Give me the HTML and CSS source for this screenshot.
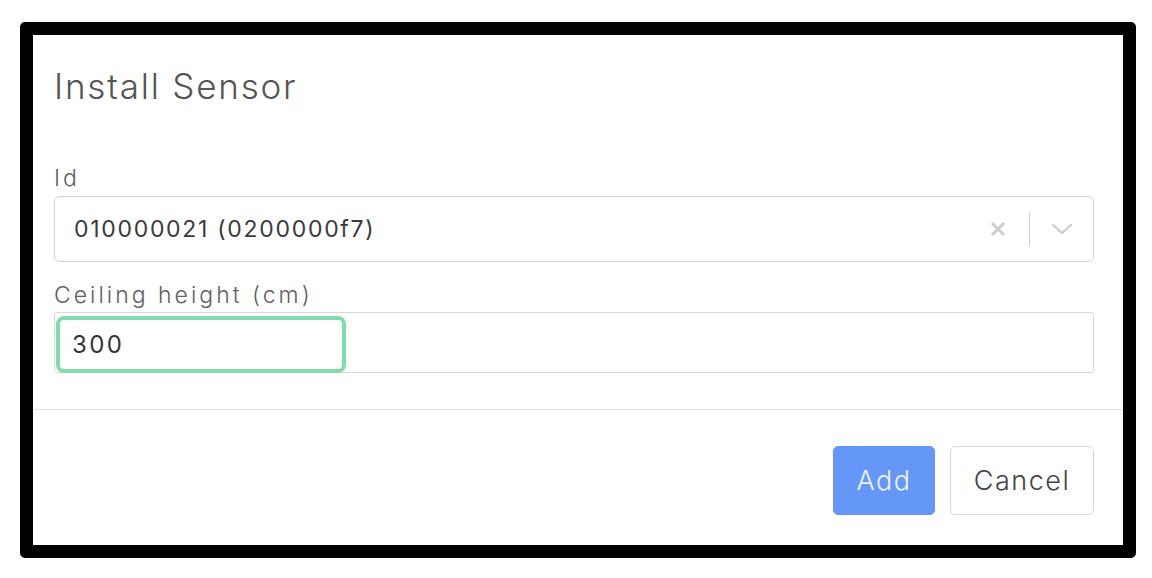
FILE: index.html
```html
<!DOCTYPE html>
<html>
<head>
<meta charset="utf-8">
<link rel="stylesheet" href="styles.css">
</head>
<body>
<div class="dialog">
  <div class="header">
    <h1 class="title">Install Sensor</h1>
  </div>
  <div class="body">
    <label class="label">Id</label>
    <div class="select">
      <span class="select-value">010000021 (0200000f7)</span>
      <div class="select-indicators">
        <svg class="clear-icon" width="18" height="18" viewBox="0 0 18 18"><path d="M3 3 L15 15 M15 3 L3 15" stroke="#cccccc" stroke-width="3" stroke-linecap="butt" fill="none"/></svg>
        <span class="sep"></span>
        <svg class="chevron" width="22" height="12" viewBox="0 0 22 12"><path d="M2 2 L11 10 L20 2" stroke="#cccccc" stroke-width="2.2" fill="none" stroke-linecap="round" stroke-linejoin="round"/></svg>
      </div>
    </div>
    <label class="label label-second">Ceiling height (cm)</label>
    <div class="input-wrap">
      <div class="input-focus">300</div>
    </div>
  </div>
  <div class="footer">
    <button class="btn btn-primary">Add</button>
    <button class="btn btn-default">Cancel</button>
  </div>
</div>
</body>
</html>
```
FILE: styles.css
```css
html, body {
  margin: 0;
  padding: 0;
  background: #ffffff;
}
body {
  font-family: "Inter", "Noto Sans", sans-serif;
  padding: 22px 0 0 20px;
}
.dialog {
  box-sizing: border-box;
  width: 1116px;
  height: 536px;
  border: 13px solid #000000;
  border-radius: 5px;
  background: #ffffff;
  display: flex;
  flex-direction: column;
}
.header {
  padding: 31px 29px 0 21px;
}
.title {
  margin: 0;
  font-size: 35px;
  line-height: 40px;
  font-weight: 300;
  color: #555555;
  letter-spacing: 1.8px;
}
.body {
  padding: 59px 29px 36px 21px;
  display: flex;
  flex-direction: column;
}
.label {
  display: block;
  font-size: 23px;
  line-height: 26px;
  font-weight: 300;
  color: #606060;
  letter-spacing: 3px;
  margin-bottom: 4px;
}
.label-second {
  margin-top: 20px;
}
.select {
  box-sizing: border-box;
  height: 66px;
  margin-top: 1px;
  border: 1px solid #d4d4d4;
  border-radius: 5px;
  display: flex;
  align-items: center;
  justify-content: space-between;
  padding: 0 20px 0 19px;
}
.select-value {
  font-size: 23px;
  font-weight: 400;
  color: #3a3a3a;
  letter-spacing: 1.7px;
}
.select-indicators {
  display: flex;
  align-items: center;
}
.clear-icon {
  display: block;
}
.sep {
  display: block;
  width: 1px;
  height: 33px;
  background: #cccccc;
  margin: 0 21px 0 22px;
}
.chevron {
  display: block;
}
.input-wrap {
  box-sizing: border-box;
  height: 61px;
  border: 1px solid #d9d9d9;
  border-radius: 3px;
  padding: 3px 0 0 1px;
}
.input-focus {
  box-sizing: border-box;
  width: 290px;
  height: 57px;
  border: 4px solid #80dbb1;
  border-radius: 8px;
  padding-left: 12px;
  font-size: 24px;
  line-height: 49px;
  color: #333333;
  letter-spacing: 2.4px;
}
.footer {
  border-top: 1px solid #e3e3e3;
  padding: 36px 29px 0 0;
  display: flex;
  justify-content: flex-end;
  gap: 15px;
}
.btn {
  box-sizing: border-box;
  height: 69px;
  border-radius: 5px;
  font-family: "Inter", "Noto Sans", sans-serif;
  font-size: 27px;
  font-weight: 300;
  letter-spacing: 1.5px;
  padding: 0;
}
.btn-primary {
  width: 102px;
  background: #6497f7;
  border: 1px solid #6497f7;
  color: #eef3ff;
}
.btn-default {
  width: 144px;
  background: #ffffff;
  border: 1px solid #d9d9d9;
  color: #444444;
}
```
